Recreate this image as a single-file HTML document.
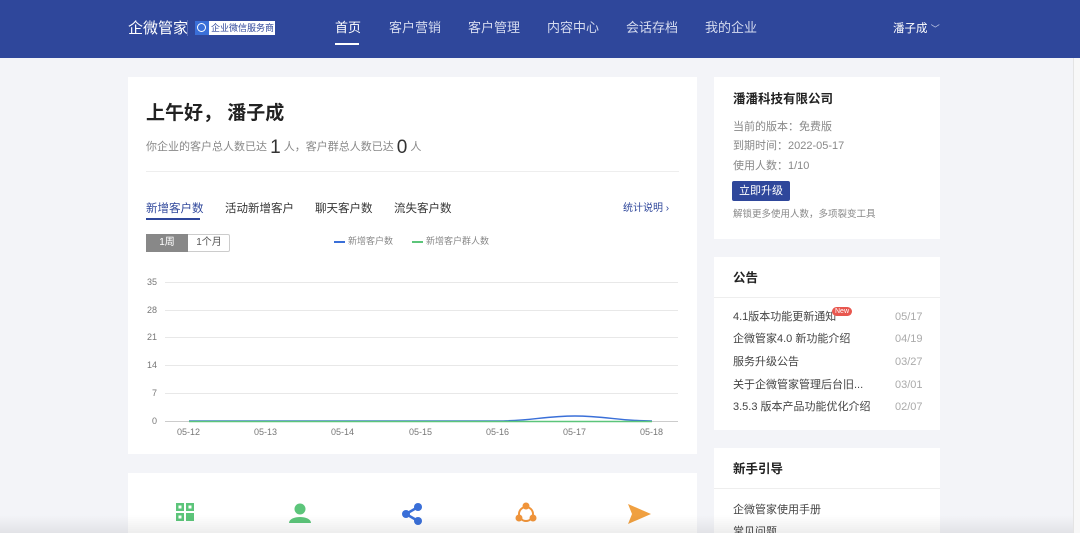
<!DOCTYPE html>
<html><head><meta charset="utf-8"><style>
*{margin:0;padding:0;box-sizing:border-box}
html,body{width:1080px;height:533px;overflow:hidden}
body{background:#f3f4f8;font-family:"Liberation Sans","Noto Sans CJK SC",sans-serif;position:relative;color:#333;line-height:1.75}
.nav{position:absolute;left:0;top:0;width:1080px;height:58px;background:#2f479b}
.abs{position:absolute;white-space:nowrap}
.card{position:absolute;background:#fff;overflow:hidden}
.nv{color:#d5dbef;font-size:13px;top:17px}
.g{color:#888;font-size:11px}
.li{font-size:11px;color:#444;line-height:14px}
.dt{font-size:11px;color:#aaa;line-height:14px}
.yl{font-size:9px;color:#777;left:143px;width:14px;text-align:right}
.xl{font-size:9px;color:#777;top:425px}
.gl{position:absolute;left:165px;width:513px;height:1px;background:#e8e8e8}
</style></head><body>
<div class="nav">
 <div class="abs" style="left:128px;top:16px;color:#fff;font-size:15px">企微管家</div>
 <div class="abs" style="left:187px;top:20px;width:1px;height:16px;background:#5a6db0"></div>
 <div class="abs" style="left:195px;top:21px;width:80px;height:14px;background:#fff;"></div>
 <div class="abs" style="left:195px;top:21px;width:14px;height:14px;background:#3a6fd8"></div>
 <div class="abs" style="left:197px;top:23px;width:9px;height:9px;border:1.5px solid #fff;border-radius:50%"></div>
 <div class="abs" style="left:211px;top:21px;color:#2f479b;font-size:9px;line-height:14px">企业微信服务商</div>
 <div class="abs nv" style="left:335px;color:#fff">首页</div>
 <div class="abs" style="left:335px;top:43px;width:24px;height:2px;background:#fff"></div>
 <div class="abs nv" style="left:389px">客户营销</div>
 <div class="abs nv" style="left:468px">客户管理</div>
 <div class="abs nv" style="left:547px">内容中心</div>
 <div class="abs nv" style="left:626px">会话存档</div>
 <div class="abs nv" style="left:705px">我的企业</div>
 <div class="abs" style="left:893px;top:19px;color:#fff;font-size:11.5px">潘子成 <span style="color:#c5cde8;font-size:9px">﹀</span></div>
</div>
<div class="abs" style="left:1073px;top:58px;width:7px;height:475px;background:#f8f8f8;border-left:1px solid #e4e4e4"></div>

<div class="card" style="left:128px;top:77px;width:569px;height:377px">
 <div class="abs" style="left:18px;top:20px;font-size:19px;color:#222;font-weight:bold">上午好， 潘子成</div>
 <div class="abs g" style="left:18px;top:54px;color:#888"><span style="vertical-align:middle">你企业的客户总人数已达</span> <span style="font-size:19px;color:#333;vertical-align:middle">1</span> <span style="vertical-align:middle">人，客户群总人数已达</span> <span style="font-size:19px;color:#333;vertical-align:middle">0</span> <span style="vertical-align:middle">人</span></div>
 <div class="abs" style="left:18px;top:94px;width:533px;height:1px;background:#eee"></div>
 <div class="abs" style="left:18px;top:122px;font-size:11.5px;color:#2f479b">新增客户数</div>
 <div class="abs" style="left:18px;top:141px;width:54px;height:2px;background:#2f479b"></div>
 <div class="abs" style="left:97px;top:122px;font-size:11.5px;color:#333">活动新增客户</div>
 <div class="abs" style="left:187px;top:122px;font-size:11.5px;color:#333">聊天客户数</div>
 <div class="abs" style="left:266px;top:122px;font-size:11.5px;color:#333">流失客户数</div>
 <div class="abs" style="left:495px;top:123px;font-size:10px;color:#2f479b">统计说明 ›</div>
 <div class="abs" style="left:18px;top:157px;width:84px;height:18px;border:1px solid #ccc;border-radius:2px"></div>
 <div class="abs" style="left:18px;top:157px;width:42px;height:18px;background:#888;color:#fff;font-size:10px;text-align:center;line-height:18px">1周</div>
 <div class="abs" style="left:60px;top:157px;width:42px;height:18px;color:#555;font-size:10px;text-align:center;line-height:18px">1个月</div>
 <div class="abs" style="left:206px;top:164px;width:11px;height:2px;background:#3a6fd8"></div>
 <div class="abs" style="left:220px;top:157px;font-size:9px;color:#888">新增客户数</div>
 <div class="abs" style="left:284px;top:164px;width:11px;height:2px;background:#5cc57a"></div>
 <div class="abs" style="left:298px;top:157px;font-size:9px;color:#888">新增客户群人数</div>
</div>
<div class="gl" style="top:282px"></div><div class="gl" style="top:310px"></div><div class="gl" style="top:337px"></div><div class="gl" style="top:365px"></div><div class="gl" style="top:393px"></div><div class="gl" style="top:421px;background:#ccc"></div>
<div class="abs yl" style="top:275px">35</div><div class="abs yl" style="top:303px">28</div><div class="abs yl" style="top:330px">21</div><div class="abs yl" style="top:358px">14</div><div class="abs yl" style="top:386px">7</div><div class="abs yl" style="top:414px">0</div>
<div class="abs xl" style="left:177px">05-12</div><div class="abs xl" style="left:254px">05-13</div><div class="abs xl" style="left:331px">05-14</div><div class="abs xl" style="left:409px">05-15</div><div class="abs xl" style="left:486px">05-16</div><div class="abs xl" style="left:563px">05-17</div><div class="abs xl" style="left:640px">05-18</div>
<svg class="abs" style="left:0;top:0" width="700" height="440"><path d="M189 421 L498 421 C530 421 545 416 575 416 C605 416 620 421 652 421" stroke="#3a6fd8" stroke-width="1.5" fill="none"/><path d="M189 421.5 L652 421.5" stroke="#5cc57a" stroke-width="1.5"/></svg>

<div class="card" style="left:128px;top:473px;width:569px;height:60px"></div>
<svg class="abs" style="left:0;top:495px" width="700" height="38">
 <g fill="#5cc57a"><rect x="176" y="8" width="8" height="8"/><rect x="186" y="8" width="8" height="8"/><rect x="176" y="18" width="8" height="8"/><rect x="186" y="18" width="8" height="8"/></g>
 <g fill="#fff"><rect x="178.5" y="10.5" width="3" height="3"/><rect x="188.5" y="10.5" width="3" height="3"/><rect x="178.5" y="20.5" width="3" height="3"/></g>
 <circle cx="300" cy="14" r="5.5" fill="#5cc57a"/><path d="M289 28 C289 20 311 20 311 28 Z" fill="#5cc57a"/>
 <g fill="#3a6fd8"><circle cx="406" cy="19" r="4"/><circle cx="418" cy="12" r="4"/><circle cx="418" cy="26" r="4"/><path d="M406 19 L418 12 M406 19 L418 26" stroke="#3a6fd8" stroke-width="2.5"/></g>
 <g><circle cx="526" cy="19" r="7" stroke="#f0943a" stroke-width="2" fill="none"/><circle cx="526" cy="11" r="3.5" fill="#f0943a"/><circle cx="519" cy="23" r="3.5" fill="#f0943a"/><circle cx="533" cy="23" r="3.5" fill="#f0943a"/></g>
 <path d="M628 9 L651 19 L628 29 L632 19 Z" fill="#f0a040"/>
</svg>

<div class="card" style="left:714px;top:77px;width:226px;height:162px">
 <div class="abs" style="left:19px;top:12px;font-size:12.5px;color:#222;font-weight:bold">潘潘科技有限公司</div>
 <div class="abs g" style="left:19px;top:41px">当前的版本：免费版</div>
 <div class="abs g" style="left:19px;top:60px">到期时间：2022-05-17</div>
 <div class="abs g" style="left:19px;top:80px">使用人数：1/10</div>
 <div class="abs" style="left:18px;top:104px;width:58px;height:20px;background:#2f479b;color:#fff;font-size:11px;text-align:center;line-height:20px;border-radius:2px">立即升级</div>
 <div class="abs" style="left:19px;top:130px;font-size:9.5px;color:#888">解锁更多使用人数，多项裂变工具</div>
</div>
<div class="card" style="left:714px;top:257px;width:226px;height:173px">
 <div class="abs" style="left:19px;top:11px;font-size:12.5px;color:#222;font-weight:bold">公告</div>
 <div class="abs" style="left:0;top:40px;width:226px;height:1px;background:#eee"></div>
 <div class="abs li" style="left:19px;top:53px">4.1版本功能更新通知</div>
 <div class="abs" style="left:118px;top:50px;background:#e8574f;color:#fff;font-size:7px;padding:0 3px;border-radius:5px;line-height:9px">New</div>
 <div class="abs li" style="left:19px;top:75px">企微管家4.0 新功能介绍</div>
 <div class="abs li" style="left:19px;top:98px">服务升级公告</div>
 <div class="abs li" style="left:19px;top:121px">关于企微管家管理后台旧...</div>
 <div class="abs li" style="left:19px;top:143px">3.5.3 版本产品功能优化介绍</div>
 <div class="abs dt" style="left:181px;top:53px">05/17</div><div class="abs dt" style="left:181px;top:75px">04/19</div><div class="abs dt" style="left:181px;top:98px">03/27</div><div class="abs dt" style="left:181px;top:121px">03/01</div><div class="abs dt" style="left:181px;top:143px">02/07</div>
</div>
<div class="card" style="left:714px;top:448px;width:226px;height:85px">
 <div class="abs" style="left:19px;top:11px;font-size:12.5px;color:#222;font-weight:bold">新手引导</div>
 <div class="abs" style="left:0;top:40px;width:226px;height:1px;background:#eee"></div>
 <div class="abs li" style="left:19px;top:55px">企微管家使用手册</div>
 <div class="abs li" style="left:19px;top:77px">常见问题</div>
</div>
<div class="abs" style="left:0;top:515px;width:1073px;height:18px;background:linear-gradient(rgba(0,0,0,0),rgba(0,0,0,.07))"></div>
</body></html>
